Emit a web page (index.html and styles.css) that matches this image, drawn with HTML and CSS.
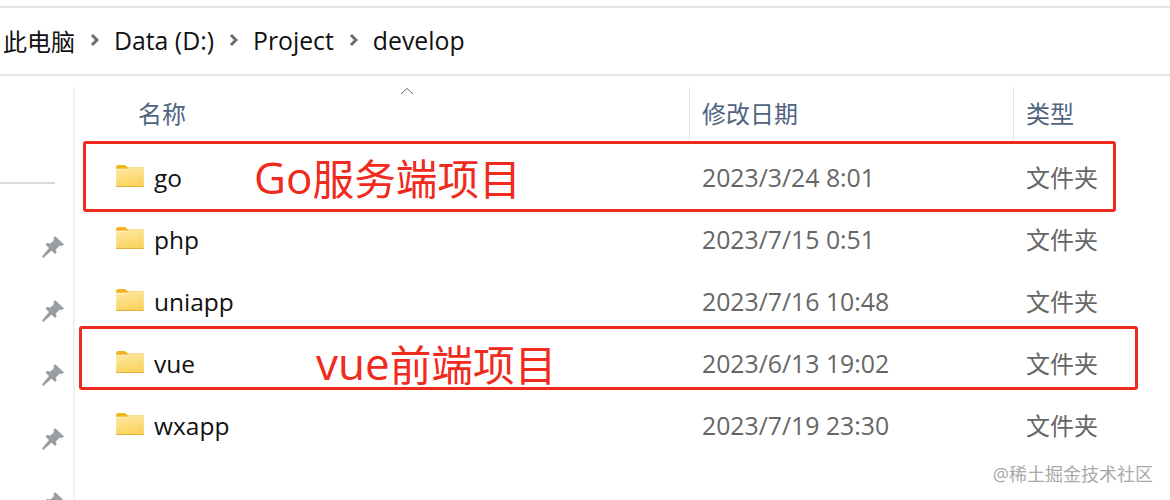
FILE: index.html
```html
<!DOCTYPE html>
<html lang="en">
<head>
  <meta charset="UTF-8">
  <title>develop</title>
  <link rel="stylesheet" href="styles.css">
</head>
<body>
  <svg class="defs" width="0" height="0">
    <defs>
      <linearGradient id="folderFill" x1="0" y1="0" x2="0.3" y2="1">
        <stop offset="0" stop-color="#fdeaa6"/>
        <stop offset="1" stop-color="#fbd360"/>
      </linearGradient>
      <symbol id="folder" viewBox="0 0 29 23">
        <path d="M0 2a2 2 0 0 1 2-2h6.500c1.500 0 2.500 2 4 2.500H29V4H0z" fill="#f2b31f"/>
        <path d="M0 4.500h12c1 0 1.500-1.500 3-1.500h14v19.500H0z" fill="url(#folderFill)"/>
        <path d="M0 22h29v1H0z" fill="#dfae3c"/>
      </symbol>
      <symbol id="pin" viewBox="0 0 22 22">
        <path d="M13 0l9 8.500-2.500 1.500-2-0.500-3.500 4 0.500 3-1.500 1.500-3.500-3.500-8 7.500-1.500-1.500 7-8.500-3.500-3.500 1.500-1.500 3.500 0.500 3.500-3.500-0.500-2z" fill="#9a9da1"/>
      </symbol>
    </defs>
  </svg>

  <div class="page">
    <nav class="crumbs">
      <span class="cjk">此电脑</span>
      <svg class="crumb-arrow" viewBox="0 0 9 14"><path d="M2 2l5 5-5 5" fill="none" stroke="#6b6b6b" stroke-width="3"/></svg>
      <span>Data (D:)</span>
      <svg class="crumb-arrow" viewBox="0 0 9 14"><path d="M2 2l5 5-5 5" fill="none" stroke="#6b6b6b" stroke-width="3"/></svg>
      <span>Project</span>
      <svg class="crumb-arrow" viewBox="0 0 9 14"><path d="M2 2l5 5-5 5" fill="none" stroke="#6b6b6b" stroke-width="3"/></svg>
      <span>develop</span>
    </nav>

    <div class="explorer">
      <aside class="sidebar">
        <div class="sidebar-line"></div>
        <div class="pins">
          <svg class="pin"><use href="#pin"/></svg>
          <svg class="pin"><use href="#pin"/></svg>
          <svg class="pin"><use href="#pin"/></svg>
          <svg class="pin"><use href="#pin"/></svg>
          <svg class="pin"><use href="#pin"/></svg>
        </div>
      </aside>

      <main class="files">
        <div class="row head">
          <div class="cell cell-name-head">名称</div>
          <div class="cell">修改日期</div>
          <div class="cell">类型</div>
        </div>
        <div class="row">
          <div class="cell cell-name"><svg class="folder"><use href="#folder"/></svg>go</div>
          <div class="cell cell-muted">2023/3/24 8:01</div>
          <div class="cell cell-muted cjk">文件夹</div>
        </div>
        <div class="row">
          <div class="cell cell-name"><svg class="folder"><use href="#folder"/></svg>php</div>
          <div class="cell cell-muted">2023/7/15 0:51</div>
          <div class="cell cell-muted cjk">文件夹</div>
        </div>
        <div class="row">
          <div class="cell cell-name"><svg class="folder"><use href="#folder"/></svg>uniapp</div>
          <div class="cell cell-muted">2023/7/16 10:48</div>
          <div class="cell cell-muted cjk">文件夹</div>
        </div>
        <div class="row">
          <div class="cell cell-name"><svg class="folder"><use href="#folder"/></svg>vue</div>
          <div class="cell cell-muted">2023/6/13 19:02</div>
          <div class="cell cell-muted cjk">文件夹</div>
        </div>
        <div class="row">
          <div class="cell cell-name"><svg class="folder"><use href="#folder"/></svg>wxapp</div>
          <div class="cell cell-muted">2023/7/19 23:30</div>
          <div class="cell cell-muted cjk">文件夹</div>
        </div>
      </main>
    </div>

    <svg class="sort-caret" viewBox="0 0 14 8"><path d="M1 7l6-5.500 6 5.500" fill="none" stroke="#666" stroke-width="1"/></svg>
    <div class="mark mark-go"><span>Go</span><span class="mark-cjk">服务端项目</span></div>
    <div class="mark mark-vue"><span>vue</span><span class="mark-cjk">前端项目</span></div>
    <div class="watermark">@稀土掘金技术社区</div>
  </div>
</body>
</html>
```

FILE: styles.css
```css
* { margin: 0; padding: 0; box-sizing: border-box; }

html,
body { width: 100%; height: 100%; overflow: hidden; background: #fff; }

body {
  font-family: "Open Sans", "Noto Sans CJK SC", sans-serif;
  color: #111;
}

.defs { position: absolute; }

.page {
  position: relative;
  width: 1170px;
  height: 500px;
  padding-top: 6px;
  overflow: hidden;
}

.cjk { font-size: 24px; }

.crumbs {
  display: flex;
  align-items: center;
  height: 70px;
  padding-left: 3px;
  padding-bottom: 2px;
  font-size: 24.800px;
  border-top: 2px solid #e4e4e4;
  border-bottom: 2px solid #e4e4e4;
  white-space: nowrap;
}
.crumb-arrow {
  width: 9px;
  height: 14px;
  margin: 0 15px;
}

.explorer {
  display: flex;
  height: 424px;
  padding-top: 11px;
}

.sidebar {
  width: 75px;
  flex: none;
  border-right: 2px solid #f1f1f1;
}
.sidebar-line {
  width: 55px;
  height: 2px;
  margin-top: 95px;
  background: #d9d9d9;
}
.pins {
  display: flex;
  flex-direction: column;
  gap: 42px;
  margin-top: 52px;
  padding-left: 42px;
}
.pin { width: 22px; height: 22px; display: block; }

.files { flex: 1; }

.row {
  display: grid;
  grid-template-columns: 614px 324px 1fr;
  height: 62px;
  padding-bottom: 2px;
  align-items: center;
  font-size: 24.800px;
}
.row.head {
  height: 60px;
  padding-bottom: 7px;
  font-size: 24px;
  color: #4f6480;
}
.head .cell {
  height: 100%;
  display: flex;
  align-items: center;
  padding-left: 12px;
  padding-bottom: 2px;
  border-left: 1px solid #e6e6e6;
}
.head .cell:first-child { border-left: 0; padding-left: 63px; }

.cell { padding-left: 13px; white-space: nowrap; }
.cell-name {
  display: flex;
  align-items: center;
  padding-left: 41px;
  font-size: 24.500px;
  color: #111;
}
.cell-muted { color: #666; }
.cell-muted.cjk { padding-bottom: 2px; }

.folder {
  width: 28px;
  height: 22px;
  margin-right: 10px;
  margin-top: -3px;
}

.sort-caret {
  position: absolute;
  left: 400px;
  top: 87px;
  width: 14px;
  height: 8px;
}

.mark {
  position: absolute;
  display: flex;
  align-items: center;
  border: 3px solid #ee2a1e;
  border-radius: 3px;
  color: #f02a1c;
  font-size: 44px;
  white-space: nowrap;
}
.mark-cjk { font-size: 41.700px; }
.mark-go {
  left: 83px;
  top: 141px;
  width: 1033px;
  height: 71px;
  padding-left: 168px;
}
.mark-vue {
  left: 79px;
  top: 326px;
  width: 1059px;
  height: 64px;
  padding-left: 234px;
  padding-top: 9px;
}

.watermark {
  position: absolute;
  right: 17px;
  top: 460px;
  font-size: 18px;
  color: #a9a9a9;
  white-space: nowrap;
}
```
